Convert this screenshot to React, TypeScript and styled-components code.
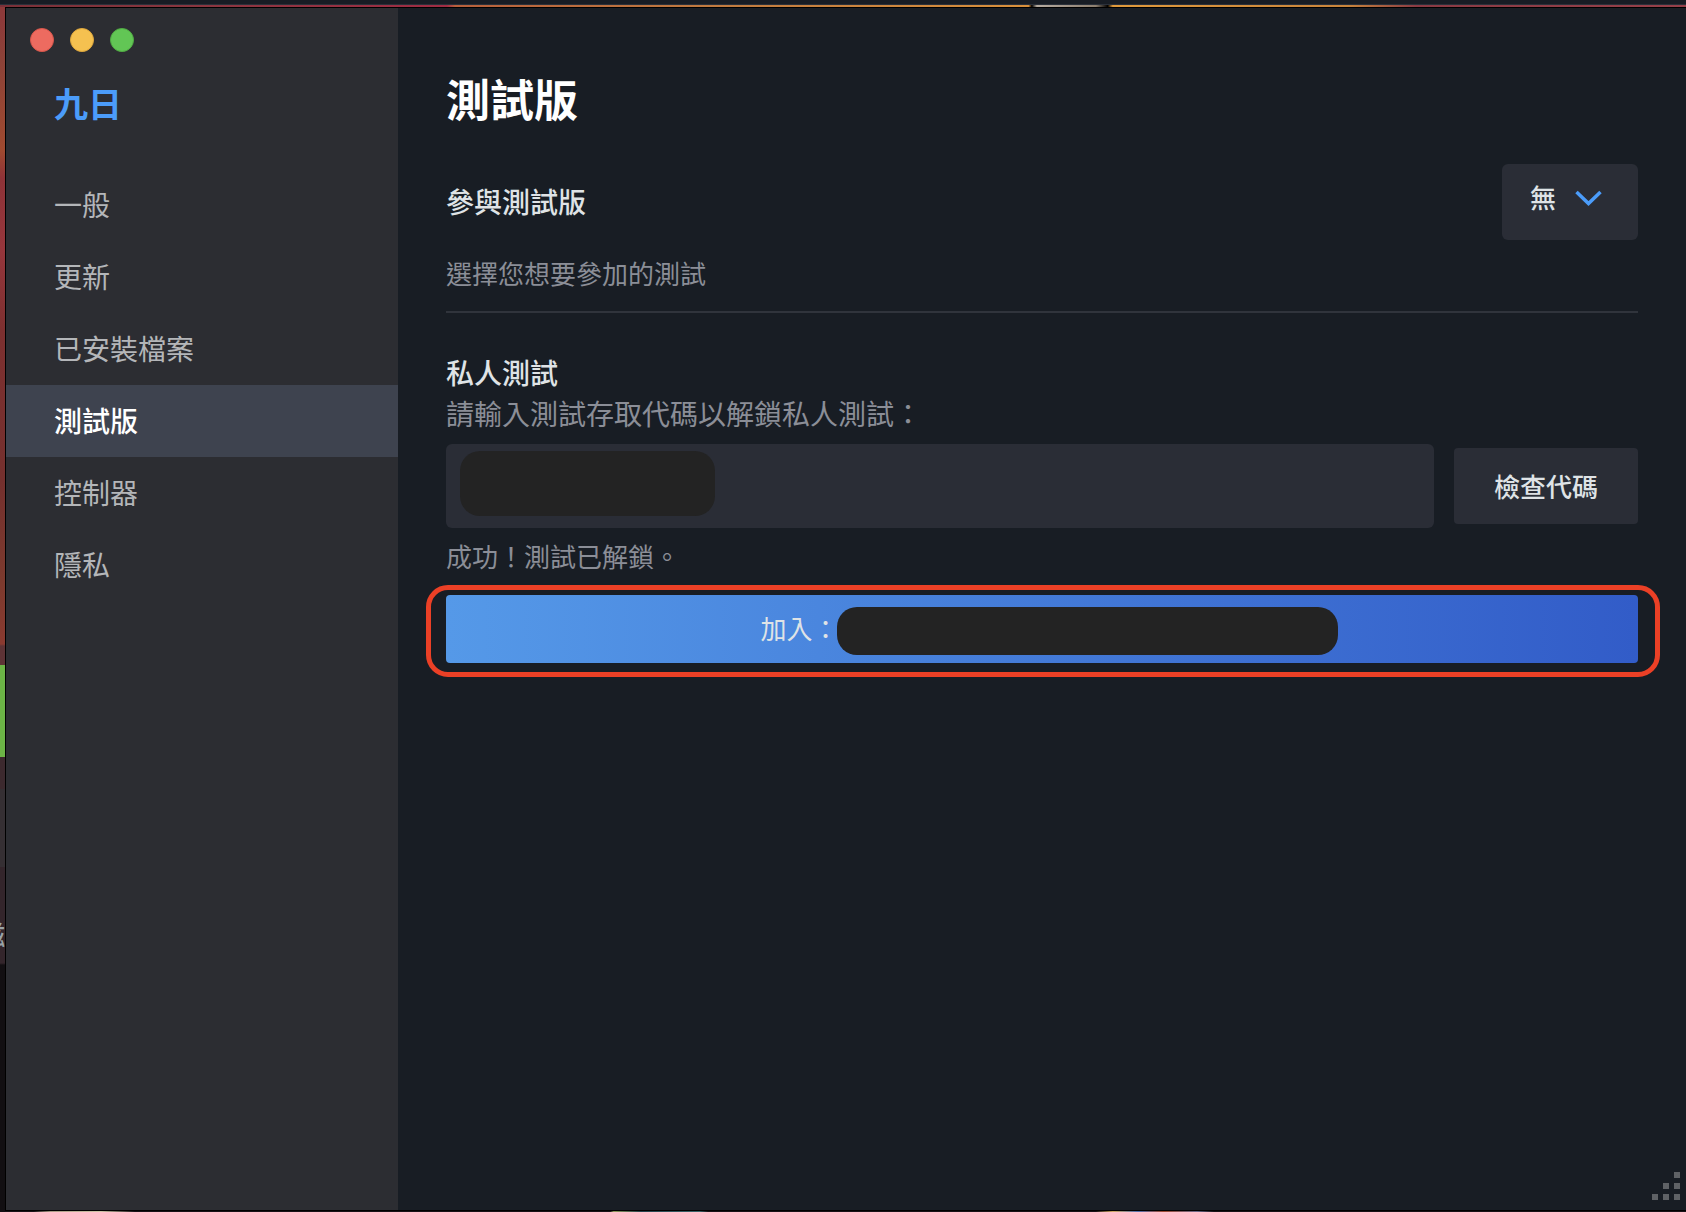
import React, { useState } from "react";
import styled, { createGlobalStyle } from "styled-components";

const color = {
  window: "#181d24",
  sidebar: "#2c2d32",
  active: "#3e434f",
  field: "#2a2d36",
  text: "#dfe3e6",
  nav: "#b4b6b9",
  muted: "#8b8e97",
  accent: "#4b9cfa",
  mask: "#232323",
  mark: "#eb4026",
};

const GlobalStyle = createGlobalStyle`
  *, *::before, *::after { box-sizing: border-box; }
  body { margin: 0; background: #171216; }
  body, button, input, select {
    font-family: "Noto Sans CJK TC", "Noto Sans", sans-serif;
  }
  h1, h2, p, ul { margin: 0; padding: 0; }
`;

const Desktop = styled.div`
  position: relative;
  display: flex;
  min-height: 100vh;
  padding: 7px 0 1px 5px;
  overflow: hidden;
  background:
    linear-gradient(#171c24 0 4px, #2a303a 4px 5px) top / 100% 5px no-repeat,
    linear-gradient(
        90deg,
        #7a3038 0%,
        #8a3640 12%,
        #a02c44 26.5%,
        #b8603c 27%,
        #c07a40 42%,
        #d8903c 61%,
        #000 61.2%,
        #b5aba0 61.5%,
        #8d7f70 65%,
        #000 65.7%,
        #e09a3c 66%,
        #c8843c 80%,
        #8a3a44 84%,
        #96404a 100%
      )
      0 5px / 100% 2px no-repeat,
    linear-gradient(
        90deg,
        transparent 2%,
        #a89a84 3%,
        #cfc6a8 6%,
        transparent 8%,
        transparent 36.2%,
        #8f9a5a 36.4%,
        #24404a 38%,
        #3a6468 41.5%,
        transparent 42%,
        transparent 65%,
        #d0a860 66%,
        #5070b0 67.5%,
        #a04a30 69%,
        #6a6a8a 71%,
        transparent 72%
      )
      bottom / 100% 1px no-repeat,
    linear-gradient(
        #8d3a3a 0 20px,
        #8c4238 60px,
        #a04a30 150px,
        #8e3338 178px,
        #96363c 250px,
        #7d3030 330px,
        #74302e 480px,
        #7c3a2e 580px,
        #8a3a30 644px,
        #5e3336 646px 665px,
        #6cb446 665px 757px,
        #3c292e 757px 789px,
        #352f33 789px 867px,
        #33252b 867px 963px,
        #120f12 965px 100%
      )
      left / 5px 100% no-repeat;
`;

const BackdropText = styled.span`
  position: absolute;
  top: 920px;
  left: -21px;
  color: #99a3a8;
  font-size: 26px;
  font-weight: 500;
  line-height: 28px;
`;

const Window = styled.div`
  position: relative;
  display: flex;
  flex: 1;
  border: solid #000;
  border-width: 1px 0 1px 1px;
  background: ${color.window};
`;

const Sidebar = styled.aside`
  flex: 0 0 392px;
  background: ${color.sidebar};
`;

const TrafficLights = styled.div`
  display: flex;
  gap: 16px;
  padding: 20px 24px 28px;
`;

const Light = styled.button<{ $fill: string; $edge: string }>`
  width: 24px;
  height: 24px;
  padding: 0;
  border: 1px solid ${(p) => p.$edge};
  border-radius: 50%;
  background: ${(p) => p.$fill};
`;

const Brand = styled.p`
  padding: 0 48px;
  color: ${color.accent};
  font-size: 34px;
  font-weight: 700;
  line-height: 46px;
`;

const NavList = styled.ul`
  margin-top: 43px;
  list-style: none;
`;

const NavLink = styled.a<{ $active: boolean }>`
  display: block;
  padding: 0 48px 2px;
  background: ${(p) => (p.$active ? color.active : "transparent")};
  color: ${(p) => (p.$active ? "#fff" : color.nav)};
  font-size: 28px;
  font-weight: ${(p) => (p.$active ? 500 : 400)};
  line-height: 70px;
  text-decoration: none;
`;

const Main = styled.main`
  flex: 1;
  min-width: 0;
  padding: 60px 48px;
`;

const Title = styled.h1`
  color: #fff;
  font-size: 44px;
  font-weight: 700;
  line-height: 60px;
`;

const Setting = styled.section`
  margin-top: 36px;
  padding-bottom: 20px;
  border-bottom: 2px solid #30343c;
`;

const SettingRow = styled.div`
  display: flex;
  align-items: center;
  justify-content: space-between;
`;

const Label = styled.label`
  padding-bottom: 2px;
  color: ${color.text};
  font-size: 28px;
  font-weight: 500;
  line-height: 40px;
`;

const Heading = styled.h2`
  color: ${color.text};
  font-size: 28px;
  font-weight: 500;
  line-height: 40px;
`;

const Hint = styled.p`
  margin-top: 15px;
  color: ${color.muted};
  font-size: 26px;
  line-height: 36px;
`;

const SelectBox = styled.div`
  position: relative;
`;

const Select = styled.select`
  display: block;
  width: 136px;
  height: 76px;
  padding: 0 60px 12px 28px;
  border: 0;
  border-radius: 6px;
  appearance: none;
  background: ${color.field};
  color: ${color.text};
  font-size: 26px;
  font-weight: 500;
`;

const Chevron = styled.svg`
  position: absolute;
  top: 24px;
  right: 36px;
  pointer-events: none;
`;

const PrivateBeta = styled.section`
  margin-top: 39px;
`;

const CodeLabel = styled.label`
  display: block;
  color: ${color.muted};
  font-size: 28px;
  line-height: 42px;
`;

const CodeRow = styled.form`
  display: flex;
  align-items: center;
  gap: 20px;
  margin-top: 10px;
`;

const CodeField = styled.div`
  position: relative;
  flex: 1;
`;

const CodeInput = styled.input`
  display: block;
  width: 100%;
  height: 84px;
  padding: 0 20px;
  border: 0;
  border-radius: 6px;
  background: ${color.field};
  color: ${color.text};
  font-size: 28px;
`;

const CodeMask = styled.span`
  position: absolute;
  top: 7px;
  left: 14px;
  width: 255px;
  height: 65px;
  border-radius: 20px;
  background: ${color.mask};
`;

const CheckButton = styled.button`
  height: 76px;
  padding: 0 40px 2px;
  border: 0;
  border-radius: 4px;
  background: ${color.field};
  color: ${color.text};
  font-size: 26px;
  font-weight: 500;
`;

const Status = styled.p`
  margin-top: 7px;
  color: ${color.muted};
  font-size: 26px;
  line-height: 42px;
`;

const JoinArea = styled.div`
  position: relative;
  margin-top: 18px;

  &::after {
    content: "";
    position: absolute;
    inset: -10px -22px -14px -20px;
    border: 5px solid ${color.mark};
    border-radius: 22px;
    pointer-events: none;
  }
`;

const JoinButton = styled.button`
  display: flex;
  align-items: center;
  justify-content: center;
  width: 100%;
  height: 68px;
  padding: 0 0 0 14px;
  border: 0;
  border-radius: 4px;
  background: linear-gradient(90deg, #5599e8, #325cc8);
  color: ${color.text};
  font-size: 26px;
  line-height: 36px;
`;

const JoinText = styled.span`
  padding-bottom: 2px;
`;

const NameMask = styled.span`
  width: 501px;
  height: 48px;
  margin: 4px 0 0 -2px;
  border-radius: 20px;
  background: ${color.mask};
`;

const Grip = styled.svg`
  position: absolute;
  right: 6px;
  bottom: 10px;
`;

const sections = ["一般", "更新", "已安裝檔案", "測試版", "控制器", "隱私"];

const lights = [
  { name: "關閉", fill: "#ed6b60", edge: "#d9564b" },
  { name: "縮到最小", fill: "#f5c150", edge: "#dfa73c" },
  { name: "縮放", fill: "#62c655", edge: "#50ab43" },
];

export default function App() {
  const [current, setCurrent] = useState("測試版");

  return (
    <>
      <GlobalStyle />
      <Desktop>
        <BackdropText aria-hidden="true">磁</BackdropText>
        <Window>
          <Sidebar>
            <TrafficLights>
              {lights.map((l) => (
                <Light key={l.name} aria-label={l.name} $fill={l.fill} $edge={l.edge} />
              ))}
            </TrafficLights>
            <Brand>九日</Brand>
            <nav>
              <NavList>
                {sections.map((name) => (
                  <li key={name}>
                    <NavLink
                      href="#"
                      $active={name === current}
                      aria-current={name === current ? "page" : undefined}
                      onClick={(e) => {
                        e.preventDefault();
                        setCurrent(name);
                      }}
                    >
                      {name}
                    </NavLink>
                  </li>
                ))}
              </NavList>
            </nav>
          </Sidebar>
          <Main>
            <Title>測試版</Title>
            <Setting>
              <SettingRow>
                <Label htmlFor="beta">參與測試版</Label>
                <SelectBox>
                  <Select id="beta" defaultValue="none">
                    <option value="none">無</option>
                  </Select>
                  <Chevron width="28" height="20" viewBox="0 0 28 20" aria-hidden="true">
                    <path d="M2.500 4 L14.500 15.500 L26.500 4" fill="none" stroke={color.accent} strokeWidth="3.500" />
                  </Chevron>
                </SelectBox>
              </SettingRow>
              <Hint>選擇您想要參加的測試</Hint>
            </Setting>
            <PrivateBeta>
              <Heading>私人測試</Heading>
              <CodeLabel htmlFor="code">請輸入測試存取代碼以解鎖私人測試：</CodeLabel>
              <CodeRow onSubmit={(e) => e.preventDefault()}>
                <CodeField>
                  <CodeInput id="code" type="text" />
                  <CodeMask />
                </CodeField>
                <CheckButton type="submit">檢查代碼</CheckButton>
              </CodeRow>
              <Status role="status">成功！測試已解鎖。</Status>
              <JoinArea>
                <JoinButton type="button">
                  <JoinText>加入：</JoinText>
                  <NameMask />
                </JoinButton>
              </JoinArea>
            </PrivateBeta>
          </Main>
          <Grip width="28" height="28" viewBox="0 0 28 28" fill="#5f6266" aria-hidden="true">
            <path d="M22 0h6v6h-6zM11 11h6v6h-6zM22 11h6v6h-6zM0 22h6v6H0zM11 22h6v6h-6zM22 22h6v6h-6z" />
          </Grip>
        </Window>
      </Desktop>
    </>
  );
}
